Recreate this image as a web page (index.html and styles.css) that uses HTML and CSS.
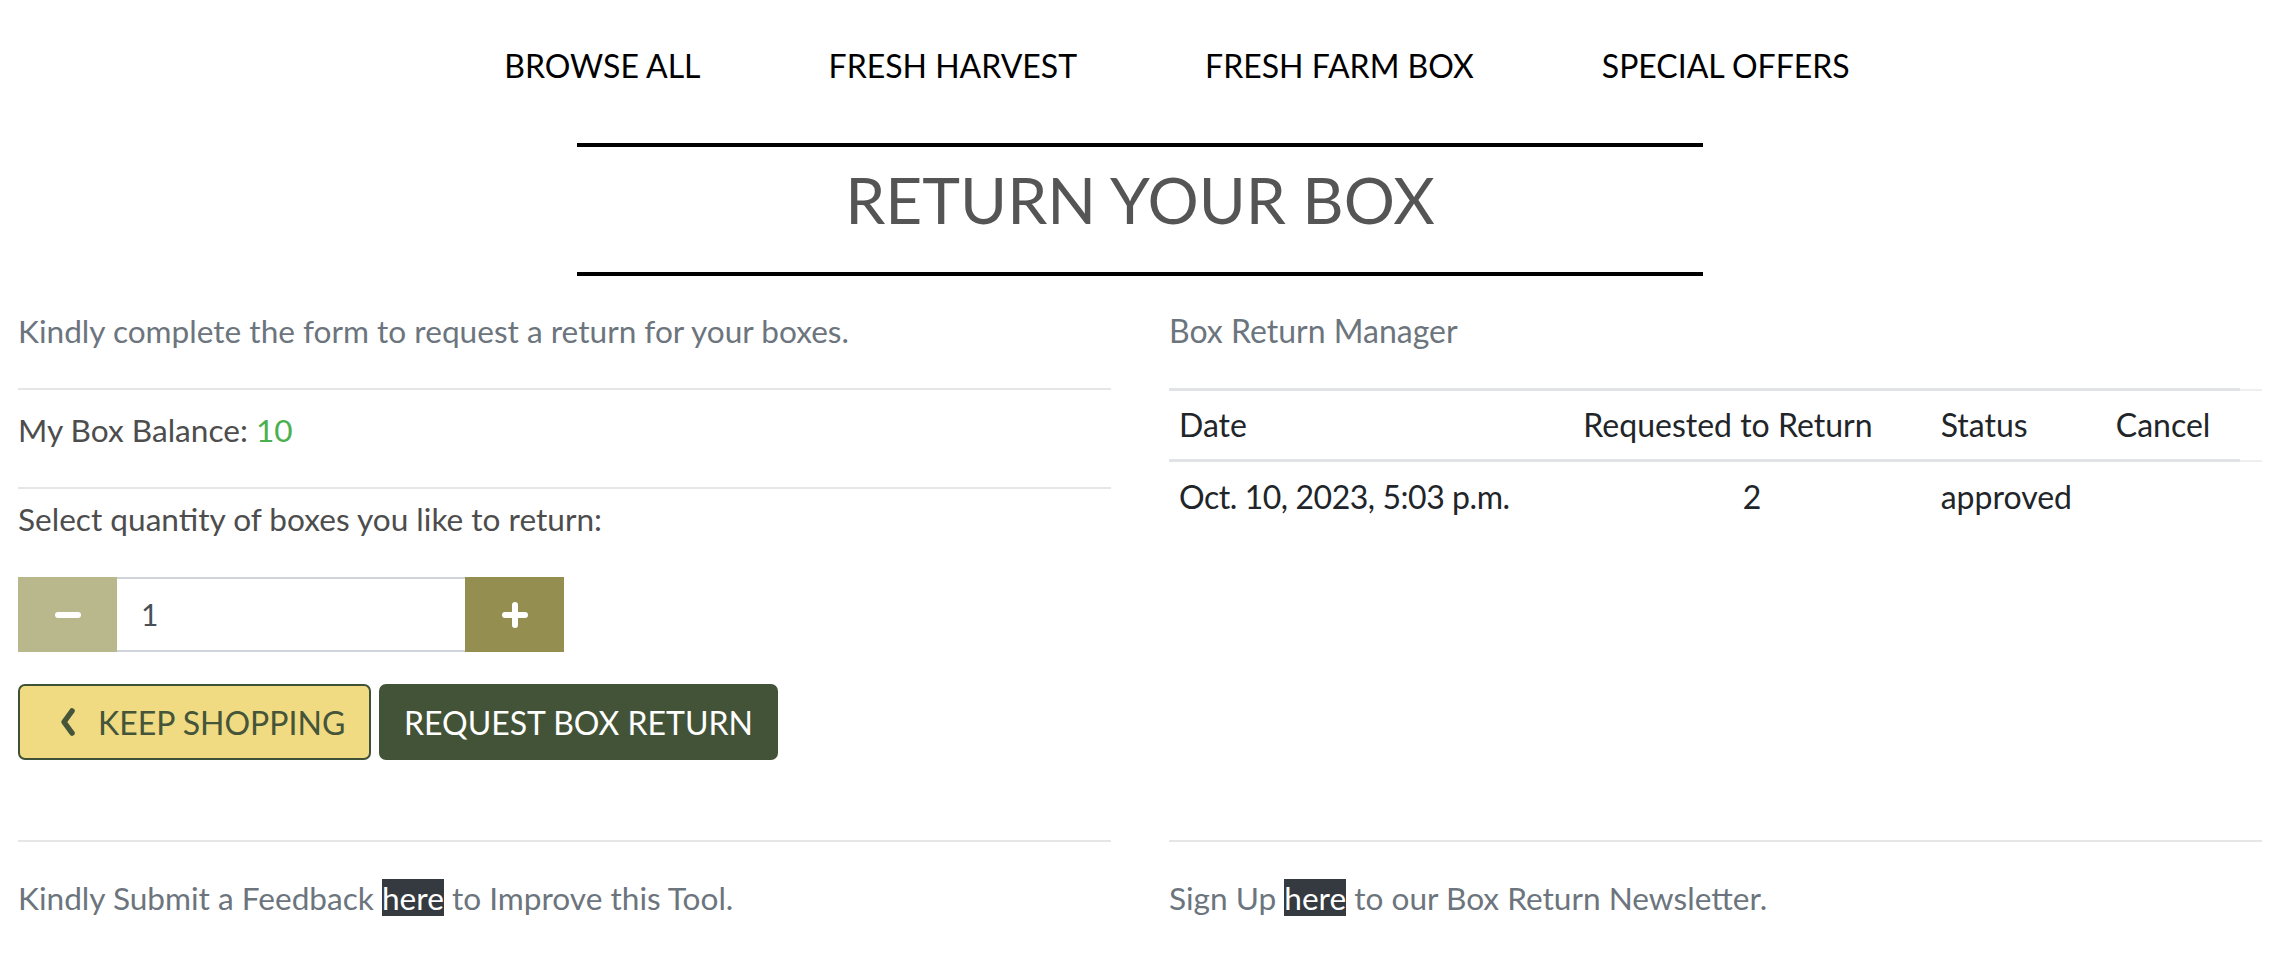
FILE: index.html
```html
<!DOCTYPE html>
<html lang="en">
<head>
<meta charset="utf-8">
<title>Return Your Box</title>
<link rel="stylesheet" href="styles.css">
</head>
<body>
<div class="page">
  <nav class="nav">
    <a class="nav-link">BROWSE ALL</a>
    <a class="nav-link">FRESH HARVEST</a>
    <a class="nav-link">FRESH FARM BOX</a>
    <a class="nav-link">SPECIAL OFFERS</a>
  </nav>

  <div class="title">
    <h1 class="title-text">RETURN YOUR BOX</h1>
  </div>

  <div class="cols">
    <section class="col col-form">
      <p class="text muted intro">Kindly complete the form to request a return for your boxes.</p>
      <div class="rule r1"></div>
      <p class="text dark balance">My Box Balance: <span class="green">10</span></p>
      <div class="rule r2"></div>
      <p class="text dark select">Select quantity of boxes you like to return:</p>

      <div class="qty">
        <button class="qty-btn minus" type="button" aria-label="decrease">
          <svg width="26" height="26" viewBox="0 0 26 26"><path d="M3 13H23" stroke="#fff" stroke-width="6" stroke-linecap="round"/></svg>
        </button>
        <div class="qty-input">1</div>
        <button class="qty-btn plus" type="button" aria-label="increase">
          <svg width="26" height="26" viewBox="0 0 26 26"><path d="M3 13H23M13 3V23" stroke="#fff" stroke-width="6" stroke-linecap="round"/></svg>
        </button>
      </div>

      <div class="actions">
        <button class="btn btn-keep" type="button">
          <svg class="chev" width="18" height="30" viewBox="0 0 18 30"><path d="M13 4L5 15L13 26" fill="none" stroke="#44553a" stroke-width="5.5" stroke-linecap="round" stroke-linejoin="round"/></svg>
          <span>KEEP SHOPPING</span>
        </button>
        <button class="btn btn-request" type="button">REQUEST BOX RETURN</button>
      </div>

      <div class="rule r3"></div>
      <p class="text muted foot">Kindly Submit a Feedback <a class="here">here</a> to Improve this Tool.</p>
    </section>

    <section class="col col-manager">
      <p class="text muted intro">Box Return Manager</p>
      <table class="table">
        <thead>
          <tr>
            <th class="c1">Date</th>
            <th class="c2">Requested to Return</th>
            <th class="c3">Status</th>
            <th class="c4">Cancel</th>
            <th class="c5"></th>
          </tr>
        </thead>
        <tbody>
          <tr>
            <td class="c1 date">Oct. 10, 2023, 5:03 p.m.</td>
            <td class="c2 center">2</td>
            <td class="c3">approved</td>
            <td class="c4"></td>
            <td class="c5"></td>
          </tr>
        </tbody>
      </table>
      <div class="spacer"></div>
      <div class="rule r3"></div>
      <p class="text muted foot">Sign Up <a class="here">here</a> to our Box Return Newsletter.</p>
    </section>
  </div>
</div>
</body>
</html>
```

FILE: styles.css
```css
* { box-sizing: border-box; }

html, body {
  margin: 0;
  padding: 0;
  background: #fff;
}

body {
  font-family: Lato, "Open Sans", "Liberation Sans", sans-serif;
  color: #212529;
}

.page {
  width: 2292px;
  padding: 0 30px 0 18px;
}

/* NAV */
.nav {
  display: flex;
  justify-content: center;
  gap: 128px;
  padding: 46px 0 0 74px;
  height: 86px;
}

.nav-link {
  font-size: 32px;
  line-height: 40px;
  color: #000;
  text-decoration: none;
}

/* TITLE */
.title {
  width: 1126px;
  margin: 57px auto 0;
  border-top: 4px solid #000;
  border-bottom: 4px solid #000;
  padding: 13px 0 33px;
}

.title-text {
  margin: 0;
  text-align: center;
  font-size: 64px;
  line-height: 79px;
  font-weight: 400;
  color: #555;
}

/* COLUMNS */
.cols {
  display: flex;
  gap: 58px;
}

.col {
  flex: 1 1 0;
  display: flex;
  flex-direction: column;
}

.text {
  margin: 0;
  font-size: 32px;
  line-height: 36px;
}

.col-form .text,
.col .foot { font-size: 31.6px; }

.muted { color: #6c757d; }
.dark { color: #4d4d4d; }
.green { color: #4caf50; }

.intro { margin-top: 37px; }

.rule {
  height: 2px;
  background: #e6e6e6;
}

.r1 { margin-top: 39px; }
.balance { margin-top: 22px; }
.r2 { margin-top: 39px; }
.select { margin-top: 12px; }

/* QUANTITY */
.qty {
  display: flex;
  margin-top: 40px;
  height: 75px;
}

.qty-btn {
  width: 99px;
  height: 75px;
  border: 0;
  padding: 0;
  display: flex;
  align-items: center;
  justify-content: center;
}

.minus { background: #b9b78c; }
.plus { background: #948f50; }

.qty-input {
  width: 348px;
  border-top: 2px solid #ced4da;
  border-bottom: 2px solid #ced4da;
  font-size: 30px;
  line-height: 71px;
  padding-left: 24px;
  color: #495057;
}

/* BUTTONS */
.actions {
  display: flex;
  gap: 8px;
  margin-top: 32px;
}

.btn {
  height: 76px;
  border-radius: 7px;
  font-family: Lato, "Open Sans", "Liberation Sans", sans-serif;
  font-size: 32px;
  display: flex;
  align-items: center;
}

.btn-keep {
  width: 353px;
  background: #f0da82;
  border: 2px solid #3f5136;
  color: #44553a;
  padding: 0 0 0 39px;
  gap: 21px;
}

.btn-request {
  width: 399px;
  background: #435337;
  border: 0;
  color: #fff;
  justify-content: center;
}

.r3 { margin-top: 80px; }
.foot { margin-top: 38px; }

.here {
  background: #343a40;
  color: #fff;
  text-decoration: none;
}

/* TABLE */
.table {
  margin-top: 39px;
  border-collapse: collapse;
  width: 100%;
  font-size: 32px;
  color: #212529;
}

.table th, .table td {
  text-align: left;
  font-weight: 400;
  line-height: 36px;
  padding: 16px 10px;
  border-top: 3px solid #e1e3e6;
}

.table thead th {
  border-bottom: 3px solid #e1e3e6;
}

.table tbody td {
  border-top: 0;
  padding-top: 17px;
}

.table .center { text-align: center; }
.table .date { letter-spacing: -0.45px; }

.c1 { width: 404px; }
.c2 { width: 357px; }
.c3 { width: 175px; }
.c4 { width: 134px; }
.table .c5 { width: 22px; padding: 0; border-color: #efefef; }
.table thead .c5 { border-top-width: 2px; border-bottom-width: 2px; }

.spacer { flex: 1; }
```
